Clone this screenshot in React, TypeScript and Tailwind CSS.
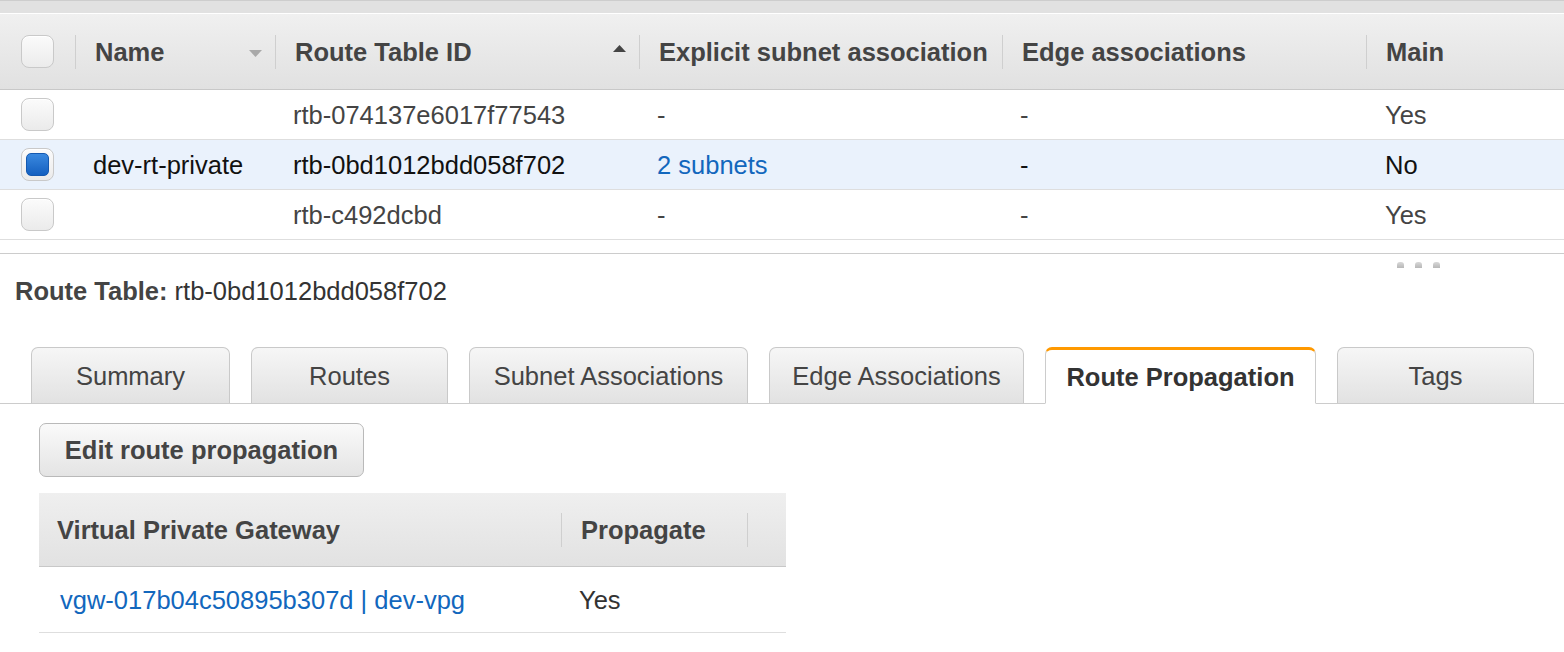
import React from "react";

const FONT = "font-['Liberation_Sans',Arial,Helvetica,sans-serif]";

function Checkbox({ checked = false }: { checked?: boolean }) {
  return (
    <div className="w-[33px] h-[33px] rounded-[8px] border border-[#c9c9c9] bg-gradient-to-b from-[#fbfbfb] to-[#ebebeb] flex items-center justify-center shadow-[inset_0_1px_0_#fff]">
      {checked && (
        <div className="w-[23px] h-[23px] rounded-[5px] bg-gradient-to-b from-[#3a89df] to-[#1460c0] border border-[#1559b0]" />
      )}
    </div>
  );
}

function HeaderCell({
  label,
  sort,
  sep = true,
}: {
  label: string;
  sort?: "up" | "down";
  sep?: boolean;
}) {
  return (
    <div className="flex items-center h-full min-w-0 pt-[2px]">
      {sep && <div className="w-px h-[34px] bg-[#cfcfcf] shrink-0 -mt-[2px]" />}
      <div className="ml-[19px] flex-1 min-w-0 whitespace-nowrap font-bold text-[#444]">
        {label}
      </div>
      {sort === "down" && (
        <svg width="13" height="7" viewBox="0 0 13 7" className="mr-[13px] mt-[1px] shrink-0">
          <path d="M0 0 L13 0 L6.5 7 Z" fill="#a9a9a9" />
        </svg>
      )}
      {sort === "up" && (
        <svg width="13" height="7" viewBox="0 0 13 7" className="mr-[13px] mb-[8px] shrink-0">
          <path d="M0 7 L13 7 L6.5 0 Z" fill="#444" />
        </svg>
      )}
    </div>
  );
}

const rows = [
  { name: "", id: "rtb-074137e6017f77543", subnet: "-", edge: "-", main: "Yes", selected: false },
  { name: "dev-rt-private", id: "rtb-0bd1012bdd058f702", subnet: "2 subnets", edge: "-", main: "No", selected: true },
  { name: "", id: "rtb-c492dcbd", subnet: "-", edge: "-", main: "Yes", selected: false },
];

const tabs = [
  { label: "Summary", w: "w-[199px]" },
  { label: "Routes", w: "w-[197px]" },
  { label: "Subnet Associations", w: "w-[279px]" },
  { label: "Edge Associations", w: "w-[255px]" },
  { label: "Route Propagation", w: "w-[271px]", active: true },
  { label: "Tags", w: "w-[197px]" },
];

const GRID = "grid grid-cols-[75px_200px_364px_363px_364px_198px]";

export default function App() {
  return (
    <div className={`${FONT} w-[1564px] h-[652px] overflow-hidden bg-white text-[25.5px] text-[#444]`}>
      {/* top strip */}
      <div className="h-[14px] bg-[#e1e1e1] border-t border-[#cdcdcd] border-b border-b-white" />

      {/* main table header */}
      <div className={`${GRID} h-[76px] bg-gradient-to-b from-[#f0f0f0] to-[#e1e1e1] border-b border-[#c8c8c8]`}>
        <div className="flex items-center pl-[21px]">
          <Checkbox />
        </div>
        <HeaderCell label="Name" sort="down" />
        <HeaderCell label="Route Table ID" sort="up" />
        <HeaderCell label="Explicit subnet association" />
        <HeaderCell label="Edge associations" />
        <HeaderCell label="Main" />
      </div>

      {/* rows */}
      {rows.map((r, i) => (
        <div
          key={i}
          className={`${GRID} h-[50px] border-b border-[#dedede] ${r.selected ? "bg-[#eaf2fc] text-[#111]" : "bg-white text-[#444]"}`}
        >
          <div className="flex items-center pl-[21px]">
            <Checkbox checked={r.selected} />
          </div>
          <div className="flex items-center pl-[18px] pt-[2px] whitespace-nowrap">{r.name}</div>
          <div className="flex items-center pl-[18px] pt-[2px] whitespace-nowrap">{r.id}</div>
          <div className={`flex items-center pl-[18px] pt-[2px] whitespace-nowrap ${r.subnet === "-" ? "" : "text-[#1267bd]"}`}>
            {r.subnet}
          </div>
          <div className="flex items-center pl-[18px] pt-[2px]">{r.edge}</div>
          <div className="flex items-center pl-[19px] pt-[2px]">{r.main}</div>
        </div>
      ))}

      {/* divider with resize handle */}
      <div className="mt-[13px] border-t border-[#cccccc]">
        <div className="flex gap-[11px] pl-[1397px] pt-[8px] h-[14px]">
          {[0, 1, 2].map((d) => (
            <div key={d} className="w-[7px] h-[6px] rounded-t-[3px] bg-gradient-to-b from-[#d8d8d8] to-[#b8b8b8]" />
          ))}
        </div>
      </div>

      {/* route table label */}
      <div className="mt-[8px] pl-[15px] leading-[30px] text-[#333]">
        <span className="font-bold text-[#444]">Route Table:</span> rtb-0bd1012bdd058f702
      </div>

      {/* tabs */}
      <div className="mt-[41px] flex items-end gap-[21px] pl-[31px] border-b border-[#cccccc] h-[57px]">
        {tabs.map((t) =>
          t.active ? (
            <div
              key={t.label}
              className={`${t.w} h-[57px] -mb-px rounded-t-[7px] border border-[#cccccc] border-t-[3px] border-t-[#f90] border-b-white bg-white flex items-center justify-center font-bold text-[#333] pt-[2px]`}
            >
              {t.label}
            </div>
          ) : (
            <div
              key={t.label}
              className={`${t.w} h-[56px] rounded-t-[7px] border border-b-0 border-[#c9c9c9] bg-gradient-to-b from-[#f6f6f6] to-[#e2e2e2] flex items-center justify-center text-[#444] pt-[1px]`}
            >
              {t.label}
            </div>
          )
        )}
      </div>

      {/* button */}
      <div className="pl-[39px] mt-[19px]">
        <button className="h-[54px] w-[325px] rounded-[7px] border border-[#b9b9b9] bg-gradient-to-b from-[#fafafa] to-[#e4e4e4] font-bold text-[#444] text-[25.5px] flex items-center justify-center">
          Edit route propagation
        </button>
      </div>

      {/* propagation table */}
      <div className="ml-[39px] mt-[16px] w-[747px]">
        <div className="grid grid-cols-[522px_186px_39px] h-[74px] bg-gradient-to-b from-[#efefef] to-[#e2e2e2] border-b border-[#c8c8c8]">
          <div className="flex items-center pl-[18px] pt-[2px] font-bold text-[#444] whitespace-nowrap">Virtual Private Gateway</div>
          <div className="flex items-center">
            <div className="w-px h-[34px] bg-[#cfcfcf]" />
            <div className="ml-[19px] pt-[2px] font-bold text-[#444]">Propagate</div>
          </div>
          <div className="flex items-center">
            <div className="w-px h-[34px] bg-[#cfcfcf]" />
          </div>
        </div>
        <div className="grid grid-cols-[522px_186px_39px] h-[66px] border-b border-[#dedede]">
          <div className="flex items-center pl-[21px] pt-[2px] text-[#1267bd] whitespace-nowrap">vgw-017b04c50895b307d | dev-vpg</div>
          <div className="flex items-center pl-[18px] pt-[2px] text-[#333]">Yes</div>
          <div />
        </div>
      </div>
    </div>
  );
}
